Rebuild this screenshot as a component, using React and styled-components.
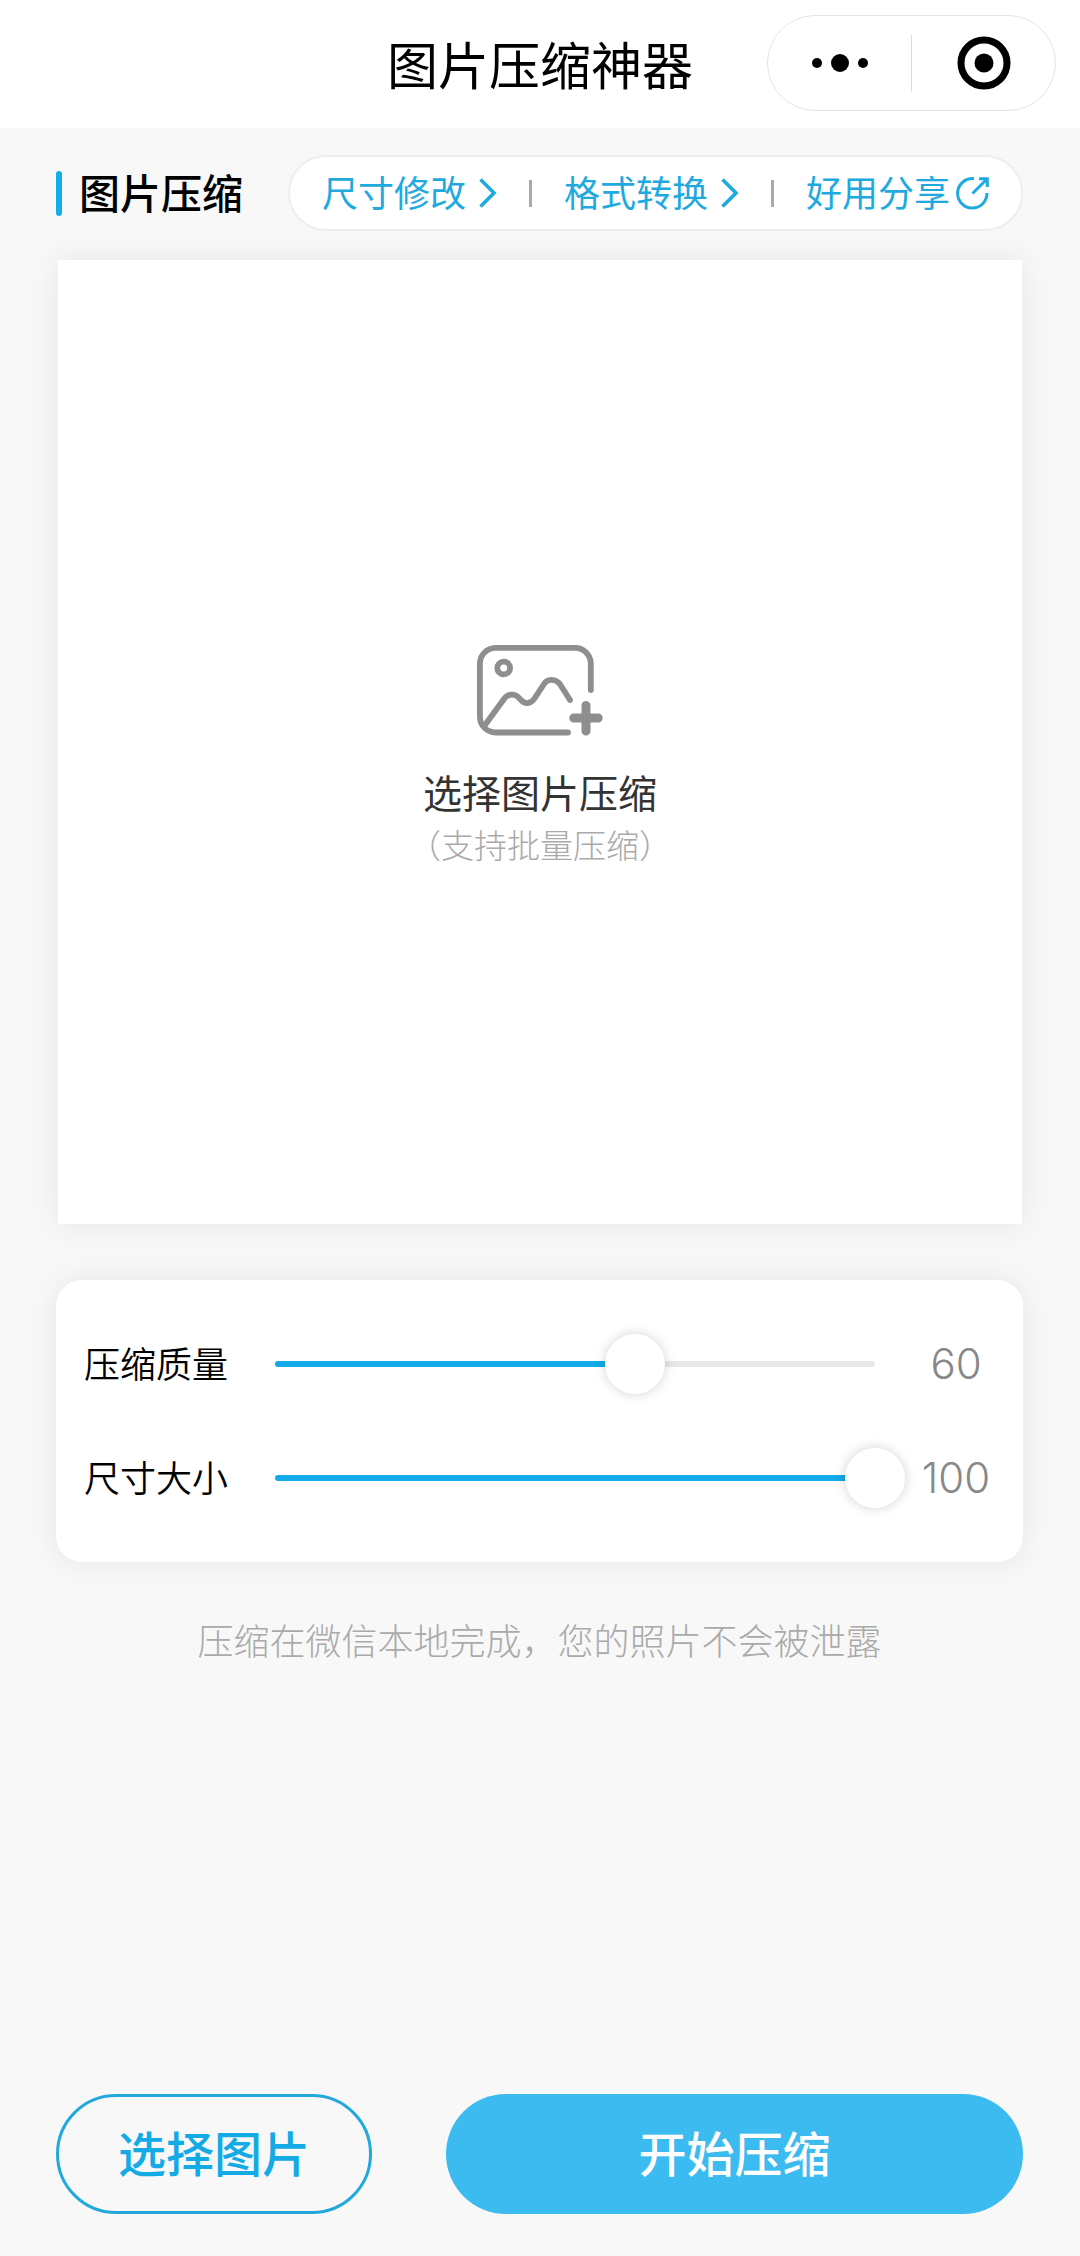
import { useState } from "react";
import styled, { createGlobalStyle } from "styled-components";

const GlobalStyle = createGlobalStyle`
  * {
    box-sizing: border-box;
  }
  body {
    margin: 0;
    background: #f8f8f8;
    color: #000;
    font-family: "Noto Sans CJK SC", sans-serif;
  }
  button {
    margin: 0;
    padding: 0;
    border: none;
    background: none;
    color: inherit;
    font-family: inherit;
    cursor: pointer;
  }
`;

const Page = styled.div`
  display: flex;
  flex-direction: column;
  min-height: 100vh;
`;

const Header = styled.header`
  display: grid;
  grid-template-columns: 1fr auto 1fr;
  align-items: center;
  height: 128px;
  padding: 0 24px 2px;
  background: #fff;
`;

const AppTitle = styled.h1`
  grid-column: 2;
  margin: 0;
  font-size: 51px;
  line-height: 72px;
  font-weight: 400;
`;

const Capsule = styled.div`
  display: flex;
  align-items: center;
  justify-self: end;
  width: 289px;
  height: 96px;
  border: 1px solid #e4e4e4;
  border-radius: 48px;
`;

const CapsuleButton = styled.button`
  display: flex;
  flex: 1;
  align-items: center;
  justify-content: center;
  height: 100%;
`;

const CapsuleLine = styled.span`
  width: 1px;
  height: 57px;
  background: #dcdcdc;
`;

const Main = styled.main`
  display: flex;
  flex: 1;
  flex-direction: column;
  padding: 27px 57px 42px 56px;
`;

const TopRow = styled.div`
  display: flex;
  align-items: center;
  justify-content: space-between;
`;

/* CJK glyphs sit low in their line box */
const Text = styled.span`
  padding-bottom: 4px;
`;

const SectionTitle = styled.h2`
  display: flex;
  align-items: center;
  gap: 17px;
  margin: 0;
  font-size: 41px;
  line-height: 56px;
  font-weight: 500;

  &::before {
    content: "";
    width: 6px;
    height: 45px;
    border-radius: 3px;
    background: #14ade8;
  }
`;

const Nav = styled.nav`
  display: flex;
  align-items: center;
  gap: 32px;
  height: 76px;
  padding: 0 32px;
  border: 2px solid #eee;
  border-radius: 38px;
  background: #fff;
`;

const NavItem = styled.a`
  display: flex;
  align-items: center;
  gap: ${({ $gap }) => $gap};
  color: #1ea9df;
  font-size: 36px;
  line-height: 52px;
  white-space: nowrap;
  text-decoration: none;
`;

const NavLine = styled.span`
  width: 3px;
  height: 27px;
  background: #aaa;
`;

const UploadBox = styled.button`
  display: flex;
  flex-direction: column;
  align-items: center;
  justify-content: center;
  aspect-ratio: 1;
  margin: 29px 1px 0 2px;
  padding-top: 30px;
  background: #fff;
  box-shadow: 0 0 30px rgba(0, 0, 0, 0.08);
`;

const UploadTitle = styled.span`
  margin-top: 28px;
  color: #333;
  font-size: 39px;
  line-height: 54px;
`;

const UploadHint = styled.span`
  color: #aaa;
  font-size: 33px;
  line-height: 52px;
  font-weight: 300;
`;

const Settings = styled.section`
  margin-top: 56px;
  padding: 27px 16px 27px 28px;
  border-radius: 26px;
  background: #fff;
  box-shadow: 0 0 30px rgba(0, 0, 0, 0.08);
`;

const SettingRow = styled.div`
  display: grid;
  grid-template-columns: 161px 1fr 102px;
  align-items: center;
  height: 114px;
`;

const SettingLabel = styled.label`
  padding-bottom: 4px;
  font-size: 36px;
  line-height: 52px;
  font-weight: 350;
`;

const SettingValue = styled.output`
  color: #888;
  font-family: Inter, sans-serif;
  font-size: 42px;
  line-height: 52px;
  font-weight: 350;
  text-align: center;
`;

const SliderBox = styled.div`
  display: grid;
  align-items: center;
`;

const Rail = styled.div`
  grid-area: 1 / 1;
  height: 6px;
  margin: 0 30px;
  border-radius: 3px;
  background: #e8e8e8;
  overflow: hidden;
`;

const RailFill = styled.div`
  height: 100%;
  background: #12aae8;
`;

const Range = styled.input`
  grid-area: 1 / 1;
  width: 100%;
  height: 60px;
  margin: 0;
  background: transparent;
  appearance: none;
  z-index: 1;

  &::-webkit-slider-thumb {
    width: 60px;
    height: 60px;
    border-radius: 50%;
    background: #fff;
    box-shadow: 0 0 12px rgba(0, 0, 0, 0.18);
    appearance: none;
  }
`;

const Note = styled.p`
  margin: 51px 0 40px;
  color: #aaa;
  font-size: 36px;
  line-height: 52px;
  font-weight: 300;
  text-align: center;
`;

const Actions = styled.div`
  display: grid;
  grid-template-columns: 316px 1fr;
  gap: 74px;
  margin-top: auto;
`;

const ActionButton = styled.button`
  height: 120px;
  padding-bottom: 6px;
  border-radius: 60px;
  font-size: 48px;
  line-height: 68px;
  font-weight: 500;
`;

const OutlineButton = styled(ActionButton)`
  border: 3px solid #22a8dd;
  color: #14aae6;
`;

const SolidButton = styled(ActionButton)`
  background: #3cbbf0;
  color: #fff;
`;

const MoreIcon = () => (
  <svg width="58" height="20" viewBox="0 0 58 20" aria-hidden="true">
    <circle cx="6" cy="10" r="5" />
    <circle cx="29" cy="10" r="9" />
    <circle cx="52" cy="10" r="5" />
  </svg>
);

const TargetIcon = () => (
  <svg width="54" height="54" viewBox="0 0 54 54" aria-hidden="true">
    <circle cx="27" cy="27" r="23" fill="none" stroke="#000" strokeWidth="7" />
    <circle cx="27" cy="27" r="9.5" />
  </svg>
);

const ChevronIcon = () => (
  <svg width="18" height="30" viewBox="0 0 18 30" aria-hidden="true">
    <path d="M1.5 1.5 15 15 1.5 28.5" fill="none" stroke="currentColor" strokeWidth="3.6" />
  </svg>
);

const ShareIcon = () => (
  <svg width="33" height="33" viewBox="0 0 33 33" aria-hidden="true">
    <path
      d="M18 1.7A14.7 14.7 0 1 0 31 16M16.5 16.5 31 2M23 1.7H31.3V10"
      fill="none"
      stroke="currentColor"
      strokeWidth="3"
    />
  </svg>
);

const AddImageIcon = () => (
  <svg width="126" height="91" viewBox="0 0 126 91" aria-hidden="true">
    <g fill="none" stroke="#8e8e8e" strokeWidth="5.8" strokeLinecap="round">
      <path d="M91 87.5H18.5A15.8 15.8 0 0 1 2.9 71.7V18.5A15.8 15.8 0 0 1 18.5 2.9H98A15.8 15.8 0 0 1 113.8 18.5V45" />
      <circle cx="26.7" cy="23" r="6.4" />
      <path d="M8 80 27 54C31 48.5 38 48 42 53L44 55C48 59.5 54 59 57.5 53.5L66 40.5C70 33 79 33 83.5 40L93 55" />
      <path d="M96.8 73H121.2M109 60.5V86" strokeWidth="9" />
    </g>
  </svg>
);

const Setting = ({ id, label, initial }) => {
  const [value, setValue] = useState(initial);

  return (
    <SettingRow>
      <SettingLabel htmlFor={id}>{label}</SettingLabel>
      <SliderBox>
        <Rail>
          <RailFill style={{ width: `${value}%` }} />
        </Rail>
        <Range
          id={id}
          type="range"
          min="0"
          max="100"
          value={value}
          onChange={(e) => setValue(Number(e.target.value))}
        />
      </SliderBox>
      <SettingValue htmlFor={id}>{value}</SettingValue>
    </SettingRow>
  );
};

const App = () => {
  return (
    <>
      <GlobalStyle />
      <Page>
        <Header>
          <AppTitle>图片压缩神器</AppTitle>
          <Capsule>
            <CapsuleButton aria-label="更多">
              <MoreIcon />
            </CapsuleButton>
            <CapsuleLine />
            <CapsuleButton aria-label="关闭">
              <TargetIcon />
            </CapsuleButton>
          </Capsule>
        </Header>
        <Main>
          <TopRow>
            <SectionTitle>
              <Text>图片压缩</Text>
            </SectionTitle>
            <Nav>
              <NavItem href="#resize" $gap="13px">
                <Text>尺寸修改</Text>
                <ChevronIcon />
              </NavItem>
              <NavLine />
              <NavItem href="#convert" $gap="13px">
                <Text>格式转换</Text>
                <ChevronIcon />
              </NavItem>
              <NavLine />
              <NavItem href="#share" $gap="6px">
                <Text>好用分享</Text>
                <ShareIcon />
              </NavItem>
            </Nav>
          </TopRow>
          <UploadBox>
            <AddImageIcon />
            <UploadTitle>选择图片压缩</UploadTitle>
            <UploadHint>（支持批量压缩）</UploadHint>
          </UploadBox>
          <Settings>
            <Setting id="quality" label="压缩质量" initial={60} />
            <Setting id="size" label="尺寸大小" initial={100} />
          </Settings>
          <Note>压缩在微信本地完成，您的照片不会被泄露</Note>
          <Actions>
            <OutlineButton>选择图片</OutlineButton>
            <SolidButton>开始压缩</SolidButton>
          </Actions>
        </Main>
      </Page>
    </>
  );
};

export default App;
